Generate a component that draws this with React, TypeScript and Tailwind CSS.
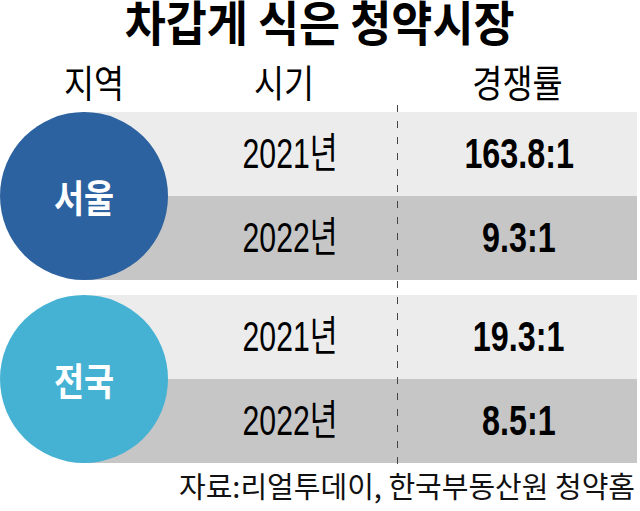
const groups = [
  {
    region: '서울',
    circle: 'bg-[#2c62a0]',
    items: [
      ['2021년', '163.8:1'],
      ['2022년', '9.3:1'],
    ],
  },
  {
    region: '전국',
    circle: 'bg-[#45b2d4]',
    items: [
      ['2021년', '19.3:1'],
      ['2022년', '8.5:1'],
    ],
  },
];

function Group({ region, circle, items }: { region: string; circle: string; items: string[][] }) {
  return (
    <div className="flex h-[168px]">
      <div className={`z-10 flex h-[168px] w-[168px] shrink-0 items-center justify-center rounded-full ${circle}`}>
        <span className="inline-block scale-x-[0.86] text-[38px] font-bold leading-none text-white">{region}</span>
      </div>
      <div className="-ml-[84px] flex flex-1 flex-col pr-[3px]">
        {items.map(([year, ratio], i) => (
          <div key={year} className={`flex h-[84px] ${i === 0 ? 'bg-[#ececec]' : 'bg-[#c7c6c6]'}`}>
            <div className="w-[99px] shrink-0" />
            <div className="flex w-[214px] shrink-0 items-center justify-center">
              <span className="inline-block scale-x-[0.72] font-['Liberation_Sans','Noto_Sans_CJK_KR',sans-serif] text-[42px] leading-none text-black">
                {year}
              </span>
            </div>
            <div className="flex flex-1 items-center justify-center pl-1">
              <span className="inline-block scale-x-[0.77] font-['Liberation_Sans','Noto_Sans_CJK_KR',sans-serif] text-[42px] font-bold leading-none text-black">
                {ratio}
              </span>
            </div>
          </div>
        ))}
      </div>
    </div>
  );
}

export default function App() {
  return (
    <div className="relative h-[511px] w-[640px] overflow-hidden bg-white font-['Noto_Sans_CJK_KR',sans-serif] text-black">
      <div className="flex h-[50px] justify-center">
        <h1 className="inline-block scale-x-[0.93] text-[48px] font-bold leading-[40px]">차갑게 식은 청약시장</h1>
      </div>

      <div className="flex h-[62px] items-center text-[38px] leading-none">
        <div className="w-[190px] text-center">
          <span className="inline-block scale-x-[0.86]">지역</span>
        </div>
        <div className="w-[207px] pr-[14px] text-center">
          <span className="inline-block scale-x-[0.86]">시기</span>
        </div>
        <div className="w-[248px] text-center">
          <span className="inline-block scale-x-[0.86]">경쟁률</span>
        </div>
      </div>

      <div className="flex flex-col gap-[15px]">
        {groups.map((g) => (
          <Group key={g.region} region={g.region} circle={g.circle} items={g.items} />
        ))}
      </div>

      <div className="flex h-[48px] items-center justify-end pb-[4px] pr-[5px]">
        <span className="inline-block text-[29px] leading-none text-[#111]">
          자료:리얼투데이, 한국부동산원 청약홈
        </span>
      </div>

      <div className="absolute left-[397px] top-[105px] h-[361px] w-px bg-[repeating-linear-gradient(to_bottom,#444_0_7px,transparent_7px_16px)]" />
    </div>
  );
}
